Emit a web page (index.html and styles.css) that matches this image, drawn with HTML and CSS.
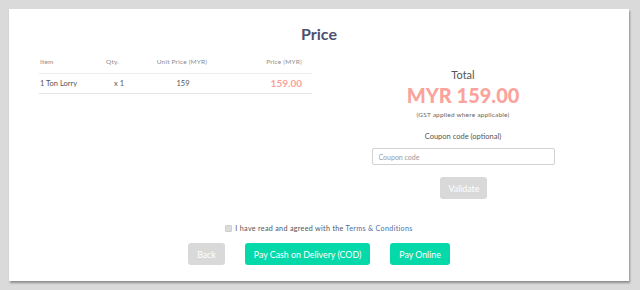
FILE: index.html
```html
<!DOCTYPE html>
<html lang="en">
<head>
    <meta charset="UTF-8">
    <title>Price</title>
    <link rel="stylesheet" href="styles.css">
</head>
<body>
    <div class="card">
        <h1 class="title">Price</h1>

        <div class="columns">
            <!-- Order items -->
            <table class="items">
                <thead>
                    <tr>
                        <th class="col-item">Item</th>
                        <th class="col-qty">Qty.</th>
                        <th class="col-unit">Unit Price (MYR)</th>
                        <th class="col-price">Price (MYR)</th>
                    </tr>
                </thead>
                <tbody>
                    <tr>
                        <td class="col-item">1 Ton Lorry</td>
                        <td class="col-qty">x 1</td>
                        <td class="col-unit">159</td>
                        <td class="col-price amount">159.00</td>
                    </tr>
                </tbody>
            </table>

            <!-- Total + coupon -->
            <div class="summary">
                <div class="total-label">Total</div>
                <div class="total-value">MYR 159.00</div>
                <div class="gst">(GST applied where applicable)</div>
                <label class="coupon-label" for="coupon">Coupon code (optional)</label>
                <input type="text" id="coupon" class="coupon-input" placeholder="Coupon code">
                <button class="btn btn-disabled validate-btn">Validate</button>
            </div>
        </div>

        <div class="agree">
            <span class="checkbox"></span>
            <span>I have read and agreed with the <a href="#" class="terms">Terms &amp; Conditions</a></span>
        </div>

        <div class="actions">
            <button class="btn btn-disabled">Back</button>
            <button class="btn btn-primary">Pay Cash on Delivery (COD)</button>
            <button class="btn btn-primary">Pay Online</button>
        </div>
    </div>
</body>
</html>
```

FILE: styles.css
```css
* {
    margin: 0;
    padding: 0;
    box-sizing: border-box;
    font-family: 'Lato', 'Liberation Sans', sans-serif;
}

body {
    background: #dadada;
    padding: 9px 11px 9px 9px;
}

.card {
    width: 620px;
    height: 272px;
    background: #fff;
    box-shadow: 1px 2px 2px rgba(0, 0, 0, 0.35);
    padding: 14px 0 0 30px;
}

.title {
    text-align: center;
    font-size: 16px;
    font-weight: 700;
    color: #4d5070;
    margin-left: -30px;
    height: 21px;
    line-height: 21px;
}

.columns {
    display: flex;
    margin-top: 6px;
}

/* Items table */
.items {
    width: 273px;
    border-collapse: collapse;
    align-self: flex-start;
}

.items th {
    font-size: 6.5px;
    font-weight: 400;
    color: #8c8c8c;
    letter-spacing: 0.2px;
    height: 23px;
    border-bottom: 1px solid #ececec;
    vertical-align: middle;
}

.items td {
    font-size: 7.5px;
    color: #555;
    height: 20px;
    border-bottom: 1px solid #e4e4e4;
}

.col-item {
    text-align: left;
    width: 67px;
    padding-left: 1px;
}

.col-qty {
    text-align: left;
    width: 36px;
}

td.col-qty {
    padding-left: 8px;
}

.col-unit {
    text-align: center;
    width: 80px;
}

.items td.col-unit {
    padding-left: 2px;
}

.col-price {
    text-align: right;
    padding-right: 10px;
}

.items td.amount {
    font-size: 10px;
    font-weight: 700;
    color: #fba39b;
}

/* Summary */
.summary {
    flex: 1;
    display: flex;
    flex-direction: column;
    align-items: center;
    padding-top: 18px;
    margin-right: 15px;
}

.total-label {
    font-size: 11px;
    color: #555;
    line-height: 14px;
}

.total-value {
    font-size: 20px;
    font-weight: 900;
    color: #fba39b;
    line-height: 22px;
    margin-top: 2px;
}

.gst {
    font-size: 6.5px;
    color: #666;
    margin-top: 5px;
    letter-spacing: 0.2px;
}

.coupon-label {
    font-size: 7.5px;
    color: #555;
    margin-top: 14px;
}

.coupon-input {
    width: 183px;
    height: 17px;
    margin-top: 7px;
    border: 1px solid #d2d2d2;
    border-radius: 2px;
    padding: 0 6px;
    font-size: 7px;
    color: #555;
    outline: none;
}

.coupon-input::placeholder {
    color: #999;
}

.validate-btn {
    margin-top: 12px;
    width: 47px;
}

/* Buttons */
.btn {
    height: 22px;
    border: none;
    border-radius: 3px;
    color: #fff;
    font-size: 8.8px;
    padding: 0 9px;
}

.btn-disabled {
    background: #d9d9d9;
}

.btn-primary {
    background: #06d9a9;
}

/* Agreement */
.agree {
    display: flex;
    align-items: center;
    justify-content: center;
    gap: 3px;
    margin-left: -30px;
    margin-top: 25px;
    font-size: 7.2px;
    color: #555;
    letter-spacing: 0.3px;
}

.checkbox {
    width: 7px;
    height: 7px;
    background: #dcdcdc;
    border: 1px solid #cfcfcf;
    border-radius: 1px;
}

.terms {
    color: #4f6fa3;
    text-decoration: none;
}

.actions {
    display: flex;
    justify-content: center;
    gap: 20px;
    margin-left: -30px;
    margin-top: 10px;
}
```
